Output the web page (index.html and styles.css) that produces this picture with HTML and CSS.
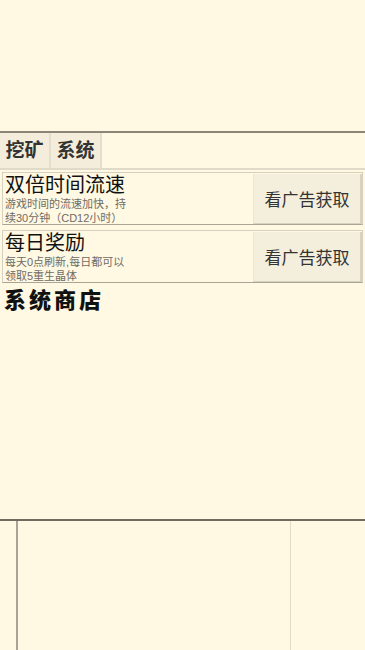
FILE: index.html
```html
<!DOCTYPE html>
<html>
<head>
<meta charset="utf-8">
<link rel="stylesheet" href="styles.css">
</head>
<body>
<div class="app">
  <div class="top"></div>
  <div class="tabs">
    <div class="tab">挖矿</div>
    <div class="tab active">系统</div>
  </div>
  <div class="list">
    <div class="row">
      <div class="info">
        <div class="title">双倍时间流速</div>
        <div class="desc">游戏时间的流速加快，持<br>续30分钟（CD12小时）</div>
      </div>
      <div class="btn">看广告获取</div>
    </div>
    <div class="row">
      <div class="info">
        <div class="title">每日奖励</div>
        <div class="desc">每天0点刷新,每日都可以<br>领取5重生晶体</div>
      </div>
      <div class="btn">看广告获取</div>
    </div>
  </div>
  <div class="shop">系统商店</div>
  <div class="spacer"></div>
  <div class="bottom">
    <div class="col-a"></div>
    <div class="col-b"></div>
    <div class="col-c"></div>
  </div>
</div>
</body>
</html>
```
FILE: styles.css
```css
html, body {
  margin: 0;
  padding: 0;
  background: #fff8e2;
}
body {
  font-family: "Liberation Sans", "Noto Sans CJK SC", sans-serif;
  color: #111;
}
.app {
  height: 650px;
  display: flex;
  flex-direction: column;
  overflow: hidden;
}
.top {
  height: 131px;
  flex: none;
  border-bottom: 2px solid #8a8576;
}
.tabs {
  display: flex;
  flex: none;
  height: 35px;
  border-bottom: 2px solid #e0dac8;
}
.tab {
  width: 49px;
  background: #f4eddb;
  border-right: 2px solid #e4decc;
  font-size: 19px;
  font-weight: 700;
  color: #333;
  line-height: 35px;
  text-align: center;
}
.list {
  display: flex;
  flex-direction: column;
  gap: 5px;
  padding: 2px 2px 0 2px;
}
.row {
  display: flex;
  height: 51px;
  border: 1px solid #d6d0be;
  border-bottom-color: #a9a595;
}
.info {
  flex: 1;
  padding-left: 2px;
}
.title {
  font-size: 20px;
  line-height: 23px;
  margin-top: 1px;
  color: #111;
}
.desc {
  font-size: 11px;
  line-height: 14px;
  color: #6f6c64;
}
.btn {
  width: 106px;
  margin: 1px 0 0 0;
  height: 49px;
  background: #f4eedc;
  border-right: 2px solid #d8d2c0;
  border-bottom: 1px solid #d8d2c0;
  border-left: 1px solid #ebe5d3;
  font-size: 17px;
  color: #333;
  display: flex;
  align-items: center;
  justify-content: center;
}
.shop {
  font-size: 22px;
  font-weight: 900;
  letter-spacing: 3px;
  padding-left: 4px;
  margin-top: 3px;
  line-height: 30px;
  color: #111;
}
.spacer {
  flex: 1;
}
.bottom {
  flex: none;
  height: 129px;
  display: flex;
  border-top: 2px solid #6e6a60;
}
.col-a {
  width: 16px;
  border-right: 2px solid #a8a396;
}
.col-b {
  width: 272px;
  border-right: 1px solid #e2dccb;
}
.col-c {
  flex: 1;
}
```
